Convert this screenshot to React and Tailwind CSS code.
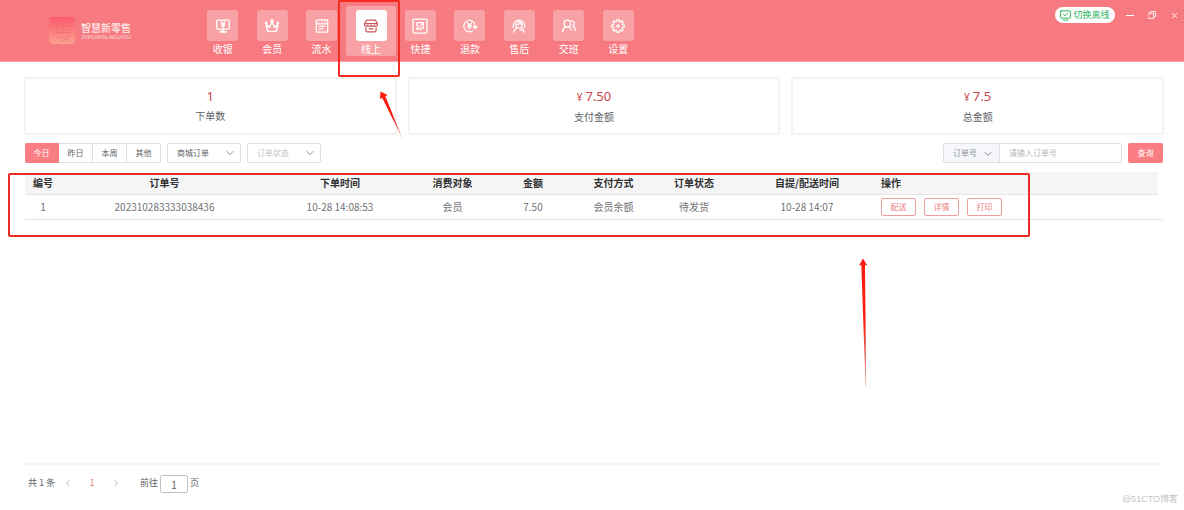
import { useState } from "react";
import clsx from "clsx";
import { ChevronDown, ChevronLeft, ChevronRight, X } from "lucide-react";

function Icon({ children, className = "size-[14px] overflow-visible" }) {
    return (
        <svg
            className={className}
            viewBox="0 0 14 14"
            fill="none"
            stroke="currentColor"
            strokeWidth="1.25"
            strokeLinecap="round"
            strokeLinejoin="round"
            aria-hidden="true"
        >
            {children}
        </svg>
    );
}

const navItems = [
    {
        label: "收银",
        icon: (
            <>
                <rect x="0.8" y="1" width="12.4" height="9" rx="0.8" />
                <path d="M5.2 2.8 7 5l1.8-2.2M7 5v3.4M5.4 5.2h3.2M5.4 6.9h3.2" />
                <path d="M7 10v2.6M4 12.8h6" strokeWidth="1.7" />
            </>
        ),
    },
    {
        label: "会员",
        icon: (
            <>
                <path d="M2.2 11.6 1.2 5.4l3.2 3L7 3l2.6 5.4 3.2-3-1 6.2c-1.8 1.3-7.8 1.3-9.6 0Z" strokeWidth="1.4" />
                <circle cx="7" cy="2" r="1.1" />
                <circle cx="1.2" cy="4" r="0.7" />
                <circle cx="12.8" cy="4" r="0.7" />
            </>
        ),
    },
    {
        label: "流水",
        icon: (
            <>
                <rect x="1.3" y="0.9" width="11.4" height="12.2" rx="0.8" />
                <path d="M1.5 4.8h11M4 7.4h6M4 9.9h4" />
                <path d="M4 2.8h.1M7 2.8h.1M10 2.8h.1" />
            </>
        ),
    },
    {
        label: "线上",
        icon: (
            <>
                <path d="M2.4 1.2h9.2l1.7 3.6v1.4c0 .7-.7 1.2-1.5 1.2s-1.6-.5-1.6-1.2c0 .7-.7 1.2-1.6 1.2S7 6.9 7 6.2c0 .7-.7 1.2-1.6 1.2s-1.6-.5-1.6-1.2c0 .7-.7 1.2-1.6 1.2S.7 6.9.7 6.2V4.8l1.7-3.6Z" />
                <path d="M.8 4.6h12.4M1.9 9v2.6c0 .7.5 1.2 1.2 1.2h7.8c.7 0 1.2-.5 1.2-1.2V9M5 9.8h4" />
            </>
        ),
    },
    {
        label: "快捷",
        icon: (
            <>
                <rect x="0" y="0" width="14" height="14" rx="1.4" />
                <path d="M4.6 3.6h5.8v5.8M10.2 3.8 7.6 6.4M3.6 4.2v1.6l2 1.8-2 2.4h4.6V8" />
            </>
        ),
    },
    {
        label: "退款",
        icon: (
            <>
                <path d="M9.4 12a5.7 5.7 0 1 1 2.8-5" />
                <path d="m10.3 7.6 1.9 2 1.8-2Z" fill="currentColor" />
                <path d="M4.5 3.8 6.5 6l2-2.2M6.5 6v4M4.6 6.3h3.8M4.6 8.1h3.8" />
            </>
        ),
    },
    {
        label: "售后",
        icon: (
            <>
                <path d="M1.4 8.4V6.6a5.6 5.6 0 0 1 11.2 0v1.8" />
                <circle cx="7" cy="5.8" r="3.2" />
                <path d="M3.9 5.8c2 .2 3.400-.6 4-1.7.4 1 1.2 1.500 2.200 1.700M1.800 13.200c.2-2.400 1.500-3.700 3.400-4.400M12.200 13.200c-.2-2.400-1.500-3.700-3.400-4.400M8 11.400h1.800" />
            </>
        ),
    },
    {
        label: "交班",
        icon: (
            <>
                <circle cx="5.3" cy="4.4" r="3.3" />
                <path d="M.5 12.600c.2-2.800 2.100-4.700 4.800-4.800 2.300.1 3.700 1.600 4.100 3.400M9.800 1.800a2.700 2.700 0 0 1 1 5.100c1.500.6 2.500 2 2.600 4.500" />
            </>
        ),
    },
    {
        label: "设置",
        icon: (
            <>
                <path d="m5.7 2.4.4-1.700h1.800l.4 1.700 1 .4 1.500-1 1.300 1.300-.9 1.600.4 1 1.700.4v1.800l-1.700.4-.4 1 .9 1.500-1.300 1.300-1.500-.9-1 .4-.4 1.700H6.100l-.4-1.700-1-.4-1.500.9-1.300-1.300.9-1.500-.4-1L.7 7.900V6.100l1.700-.4.4-1-.9-1.600 1.300-1.300 1.500 1 1-.4Z" />
                <circle cx="7" cy="7" r="1.2" />
            </>
        ),
    },
];

const stats = [
    { value: "1", label: "下单数" },
    { value: "7.50", label: "支付金额", money: true },
    { value: "7.5", label: "总金额", money: true },
];

const columns = [
    { title: "编号", width: "w-[36px]" },
    { title: "订单号", width: "w-[207px]" },
    { title: "下单时间", width: "w-[144px]" },
    { title: "消费对象", width: "w-[81px]" },
    { title: "金额", width: "w-[80px]" },
    { title: "支付方式", width: "w-[81px]" },
    { title: "订单状态", width: "w-[80px]" },
    { title: "自提/配送时间", width: "w-[146px]" },
];

const orders = [
    ["1", "202310283333038436", "10-28 14:08:53", "会员", "7.50", "会员余额", "待发货", "10-28 14:07"],
];

function Header() {
    const [active, setActive] = useState("线上");

    return (
        <header className="flex h-[62px] items-start border-b border-[#f9a0a4] bg-[#f67a80] pl-[49px] text-white">
            <div className="flex w-[149px] shrink-0 items-center gap-1.5 pt-[17px]">
                <svg className="h-[27px] w-[26px]" viewBox="0 0 26 27" fill="none" aria-hidden="true">
                    <defs>
                        <linearGradient id="brand" x1="0" y1="0" x2="0" y2="1">
                            <stop offset="0" stopColor="#fc5a70" />
                            <stop offset="1" stopColor="#fca08c" />
                        </linearGradient>
                    </defs>
                    <rect width="26" height="27" rx="4" fill="url(#brand)" />
                    <path
                        d="M7 8c1.500-3 4-4.500 6.500-4.500S19 5 20 8M6 9.500h4M16 9.500h5M13.500 4v11M5 15.500h16M7 12.500h4M16 12.500h3M21 16c0 4-3 7.500-8 7.500M9 20c3 1.200 6 1.200 9-1"
                        stroke="#e9626c"
                        strokeOpacity="0.55"
                        strokeLinecap="round"
                    />
                </svg>
                <div className="flex flex-col">
                    <span className="text-[10px] leading-[12px] font-medium text-[#feeaea]">智慧新零售</span>
                    <span className="text-[5px] leading-[6px] text-[#fddcdd]">ZHIHUIXINLINGSHOU</span>
                </div>
            </div>

            <nav className="mt-1.5 grid w-[445px] shrink-0 grid-cols-9">
                {navItems.map((item) => {
                    const isActive = item.label === active;
                    return (
                        <button
                            key={item.label}
                            onClick={() => setActive(item.label)}
                            className={clsx(
                                "relative flex h-[50px] flex-col items-center gap-px rounded-[3px] pt-1",
                                isActive && "bg-[#f8a2a6]"
                            )}
                        >
                            <span
                                className={clsx(
                                    "flex size-[31px] items-center justify-center rounded-[3px]",
                                    isActive ? "bg-white text-[#c9565a]" : "bg-[#f8a2a6]"
                                )}
                            >
                                <Icon>{item.icon}</Icon>
                            </span>
                            <span className="text-[10px] leading-[14px]">{item.label}</span>
                            {item.label === "线上" && (
                                <span className="pointer-events-none absolute -top-1.5 -right-1 -bottom-[21px] -left-2 rounded-[2px] border-2 border-[#f52a20]" />
                            )}
                        </button>
                    );
                })}
            </nav>

            <div className="ml-auto flex items-center gap-[11px] pt-[7px] pr-[5px]">
                <button className="flex h-4 w-[60px] items-center justify-center gap-0.5 rounded-full bg-white text-[9px] text-[#2fb45f]">
                    <Icon className="size-[11px]">
                        <rect x="0.8" y="1" width="12.4" height="9.4" rx="0.8" />
                        <path d="m4.500 5.500 2 2 3.600-3.700M4 12.900h6" />
                    </Icon>
                    切换离线
                </button>
                <div className="flex items-center gap-[14px]">
                    <button aria-label="最小化" className="flex h-4 w-2 items-center">
                        <span className="h-px w-2 bg-white" />
                    </button>
                    <button aria-label="还原">
                        <Icon className="size-2">
                            <path d="M1 4h9v9H1zM4 4V1h9v9h-3" strokeWidth="1.5" />
                        </Icon>
                    </button>
                    <button aria-label="关闭">
                        <X className="size-[9px]" strokeWidth={2.5} />
                    </button>
                </div>
            </div>
        </header>
    );
}

function Select({ label, options, placeholder }) {
    const [value, setValue] = useState(placeholder ? "" : options[0]);

    return (
        <div className="relative h-5 w-[74px]">
            <select
                aria-label={label}
                value={value}
                onChange={(e) => setValue(e.target.value)}
                className={clsx(
                    "h-full w-full appearance-none rounded-[2px] border border-[#dcdfe6] bg-white pl-[9px] outline-none",
                    value ? "text-[#606266]" : "text-[#c0c4cc]"
                )}
            >
                {placeholder && <option value="">{placeholder}</option>}
                {options.map((option) => (
                    <option key={option}>{option}</option>
                ))}
            </select>
            <ChevronDown className="pointer-events-none absolute top-1 right-[5px] size-3 text-[#8c8f96]" strokeWidth={2} />
        </div>
    );
}

function Filters() {
    const [range, setRange] = useState("今日");

    return (
        <div className="mt-2 flex items-center gap-1.5 px-px text-[8px] text-[#606266]">
            <div className="flex h-5">
                {["今日", "昨日", "本周", "其他"].map((item) => (
                    <button
                        key={item}
                        onClick={() => setRange(item)}
                        className={clsx(
                            "w-[34px] border-y border-r first:rounded-l-[2px] last:rounded-r-[2px]",
                            item === range ? "border-[#fa7d82] bg-[#fa7d82] text-white" : "border-[#dcdfe6]"
                        )}
                    >
                        {item}
                    </button>
                ))}
            </div>
            <Select label="订单类型" options={["商城订单"]} />
            <Select label="订单状态" placeholder="订单状态" options={["待发货"]} />

            <div className="ml-auto flex h-5 w-[179px] rounded-[2px] border border-[#dcdfe6]">
                <div className="relative w-14 border-r border-[#dcdfe6] bg-[#f5f7fa]">
                    <select
                        aria-label="搜索类型"
                        className="h-full w-full appearance-none pl-[9px] text-[#909399] outline-none"
                    >
                        <option>订单号</option>
                    </select>
                    <ChevronDown className="pointer-events-none absolute top-1 right-[5px] size-3 text-[#8c8f96]" strokeWidth={2} />
                </div>
                <input
                    aria-label="订单号"
                    placeholder="请输入订单号"
                    className="min-w-0 flex-1 px-[9px] outline-none placeholder:text-[#b4b8c0]"
                />
            </div>
            <button className="h-5 w-[35px] rounded-[2px] bg-[#fa7d82] text-white">查询</button>
        </div>
    );
}

function OrderTable() {
    return (
        <div className="relative mt-[9px] px-px">
            <table className="w-full table-fixed border-collapse text-center text-[10px] leading-[14px]">
                <thead>
                    <tr className="h-[22px] text-[#303133]">
                        {columns.map((column) => (
                            <th
                                key={column.title}
                                className={clsx("border-b border-[#e4e4e6] bg-[#f5f5f5] font-bold", column.width)}
                            >
                                {column.title}
                            </th>
                        ))}
                        <th className="border-b border-[#e4e4e6] bg-[#f5f5f5] pl-px text-left font-bold">操作</th>
                        {/* 滚动条占位 */}
                        <th className="w-[5px]" />
                    </tr>
                </thead>
                <tbody>
                    {orders.map((order) => (
                        <tr key={order[1]} className="h-[25px] border-b border-[#e4e4e6] text-[#707276]">
                            {order.map((cell, i) => (
                                <td key={columns[i].title}>{cell}</td>
                            ))}
                            <td colSpan={2} className="pl-px">
                                <div className="flex gap-2">
                                    {["配送", "详情", "打印"].map((action) => (
                                        <button
                                            key={action}
                                            className="h-[18px] w-[35px] rounded-[2px] border border-[#ee9c9e] text-[8px] text-[#e97c80]"
                                        >
                                            {action}
                                        </button>
                                    ))}
                                </div>
                            </td>
                        </tr>
                    ))}
                </tbody>
            </table>
            <div className="pointer-events-none absolute top-px right-[134px] -bottom-[17px] -left-4 rounded-[2px] border-2 border-[#ec2b24]" />
        </div>
    );
}

function Pagination() {
    return (
        <footer className="mx-px mt-auto flex h-[47px] items-start border-t-2 border-[#f6f6f7] pt-[10px] pl-[3px] text-[9px] leading-4 text-[#606266]">
            <span className="w-9">共 1 条</span>
            <button aria-label="上一页" className="flex h-4 w-2 items-center justify-center text-[#a8abb2]">
                <ChevronLeft className="size-[10px] shrink-0" />
            </button>
            <button className="w-10 text-[#ea7c7c]">1</button>
            <button aria-label="下一页" className="flex h-4 w-2 items-center justify-center text-[#a8abb2]">
                <ChevronRight className="size-[10px] shrink-0" />
            </button>
            <label className="ml-5 flex gap-0.5">
                前往
                <input
                    defaultValue="1"
                    className="h-[18px] w-7 rounded-[2px] border border-[#bfc1c6] text-center text-[10px] outline-none"
                />
                页
            </label>
        </footer>
    );
}

// 指向重点区域的标注箭头
function Arrows() {
    return (
        <svg className="pointer-events-none absolute top-0 left-0 h-[400px] w-[900px]" viewBox="0 0 900 400" aria-hidden="true">
            <defs>
                <linearGradient id="fade" x1="0" y1="0" x2="0" y2="1">
                    <stop offset="0.5" stopColor="#fa1d10" />
                    <stop offset="1" stopColor="#d04a44" stopOpacity="0.5" />
                </linearGradient>
            </defs>
            <path d="M380.500 91.500 380 99l2.300-1L403 140 385.400 96.200l2.200-1.200Z" fill="url(#fade)" />
            <path d="M863 258.500 859 265.500l2.300-.6L865.600 387h.6L865 264.900l2.300.6Z" fill="url(#fade)" />
        </svg>
    );
}

export default function App() {
    return (
        <div className="relative flex min-h-screen flex-col bg-white font-['Noto_Sans_CJK_SC','Noto_Sans',sans-serif]">
            <Header />
            <main className="flex flex-1 flex-col pt-[15px] pr-5 pl-6">
                <section className="grid grid-cols-3 gap-[11px]">
                    {stats.map((stat) => (
                        <div
                            key={stat.label}
                            className="flex h-[58px] flex-col items-center justify-center border-2 border-[#f2f2f3]"
                        >
                            <p className="flex items-baseline gap-[3px] text-[13px] leading-5 text-[#c9444c] font-['Noto_Sans','Noto_Sans_CJK_SC',sans-serif]">
                                {stat.money && <span className="text-[10px]">¥</span>}
                                {stat.value}
                            </p>
                            <p className="text-[10px] leading-5 text-[#606266]">{stat.label}</p>
                        </div>
                    ))}
                </section>
                <Filters />
                <OrderTable />
                <Pagination />
            </main>
            <Arrows />
            <span className="absolute right-1.5 bottom-1 text-[9px] leading-[14px] text-[#c4c4c6] font-['Liberation_Sans','Noto_Sans_CJK_SC',sans-serif]">
                @51CTO博客
            </span>
        </div>
    );
}
